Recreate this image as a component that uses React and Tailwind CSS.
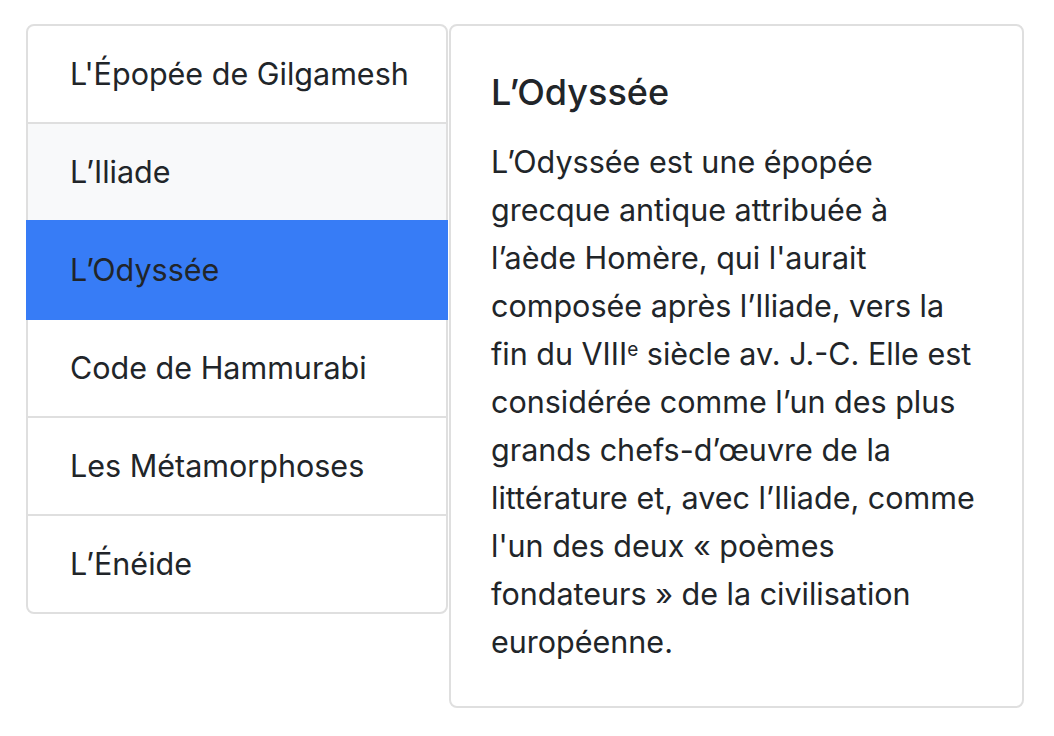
import { useState } from 'react';

const works = [
  { id: 'gilgamesh', label: "L'Épopée de Gilgamesh" },
  { id: 'iliade', label: 'L’Iliade' },
  { id: 'odyssee', label: 'L’Odyssée' },
  { id: 'hammurabi', label: 'Code de Hammurabi' },
  { id: 'metamorphoses', label: 'Les Métamorphoses' },
  { id: 'eneide', label: 'L’Énéide' },
];

export default function App() {
  const [active, setActive] = useState('odyssee');
  const hovered = 'iliade';
  const activeIndex = works.findIndex((w) => w.id === active);

  return (
    <div
      className="min-h-screen bg-white text-[#212529] flex items-start gap-[1px] pl-[26px] pt-[24px]"
      style={{ fontFamily: 'Inter, "Noto Sans", sans-serif' }}
    >
      <ul className="w-[422px] border-2 border-[#dfdfdf] rounded-lg flex flex-col">
        {works.map((w, i) => {
          const isActive = i === activeIndex;
          const afterActive = i === activeIndex + 1;
          let cls = 'flex items-center text-[30.5px] cursor-pointer ';
          if (isActive) {
            cls += 'h-[100px] border-y-2 border-[#377cf6] bg-[#377cf6] -mx-[2px] pl-[44px] ';
            if (i === 0) cls += '-mt-[2px] ';
          } else {
            cls += 'pl-[42px] ';
            if (i > 0 && !afterActive) cls += 'h-[98px] border-t-2 border-[#dfdfdf] ';
            else cls += 'h-[96px] ';
            if (w.id === hovered) cls += 'bg-[#f8f9fa] ';
          }
          if (i === 0) cls += 'rounded-t-md ';
          if (i === works.length - 1) cls += 'rounded-b-md ';
          return (
            <li key={w.id} onClick={() => setActive(w.id)} className={cls}>
              {w.label}
            </li>
          );
        })}
      </ul>

      <div className="w-[575px] border-2 border-[#dfdfdf] rounded-lg pl-[40px] pr-[44px] pt-[42px] pb-[40px]">
        <h5 className="text-[36px] font-medium leading-[48px] mb-[22px]">L’Odyssée</h5>
        <p className="text-[30.5px] leading-[48px]">
          L’Odyssée est une épopée grecque antique attribuée à l’aède Homère, qui l'aurait
          composée après l’Iliade, vers la fin du VIII<sup className="text-[19px] leading-none">e</sup> siècle
          av. J.-C. Elle est considérée comme l’un des plus grands chefs-d’œuvre de la littérature
          et, avec l’Iliade, comme l'un des deux « poèmes fondateurs » de la civilisation
          européenne.
        </p>
      </div>
    </div>
  );
}
